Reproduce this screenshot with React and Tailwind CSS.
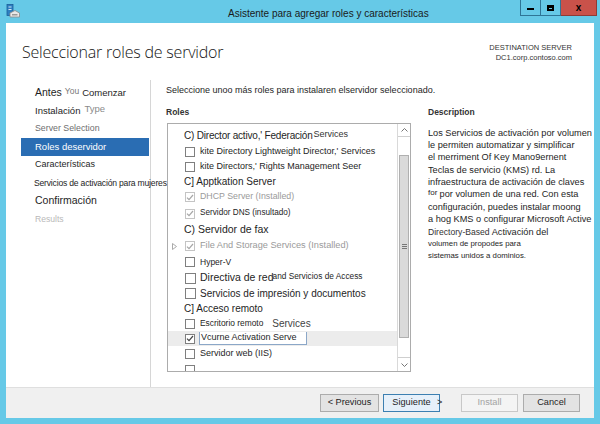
import React from "react";

function Check({ checked, disabled, big }) {
  return (
    <span
      className={
        "flex shrink-0 items-center justify-center bg-white border " +
        (big ? "w-[11px] h-[11px] " : "w-[10px] h-[10px] ") +
        (disabled ? "border-[#c4c4c4]" : "border-[#7f7f7f]")
      }
    >
      {checked && (
        <svg width="8" height="7" viewBox="0 0 8 7">
          <path
            d="M1 3.6 L3 5.6 L7 1"
            fill="none"
            stroke={disabled ? "#a6a6a6" : "#444"}
            strokeWidth="1.2"
          />
        </svg>
      )}
    </span>
  );
}

function Row({ h, className = "", children }) {
  return <div className={"flex items-center whitespace-nowrap " + h + " " + className}>{children}</div>;
}

function ServerIcon() {
  return (
    <svg width="14" height="15" viewBox="0 0 14 15">
      <rect x="1" y="0.5" width="6" height="11" fill="#2d7fc1" stroke="#1c5f99" strokeWidth="0.8" />
      <rect x="2.5" y="2.5" width="3" height="1" fill="#cfe6f7" />
      <rect x="2.5" y="5" width="3" height="1" fill="#cfe6f7" />
      <path d="M4 9 L9 6.5 L13.5 9 L13.5 13 L4 13 Z" fill="#e8e8e8" stroke="#8a8a8a" strokeWidth="0.8" />
      <rect x="6" y="10" width="5.5" height="1.5" fill="#9a9a9a" />
    </svg>
  );
}

export default function App() {
  return (
    <div className="w-[600px] h-[424px] bg-[#66c9e7] flex flex-col overflow-hidden font-['Liberation_Sans',Arial,sans-serif] text-[#1e1e1e]">
      {/* title bar */}
      <div className="h-[23px] flex items-start shrink-0">
        <div className="ml-[6px] mt-[4px]">
          <ServerIcon />
        </div>
        <div className="ml-[208px] mt-[8px] text-[10px] leading-[12px] text-[#1a1a1a] whitespace-nowrap">
          Asistente para agregar roles y características
        </div>
        <div className="ml-auto mr-[3px] flex">
          <div className="w-[21px] h-[16px] border border-[#2f7596] border-t-0 flex items-center justify-center">
            <span className="w-[7px] h-[2px] bg-black mt-[3px]" />
          </div>
          <div className="w-[20px] h-[16px] border border-l-0 border-t-0 border-[#2f7596] flex items-center justify-center">
            <span className="w-[7px] h-[6px] border-2 border-black border-t-[3px]" />
          </div>
          <div className="w-[36px] h-[16px] bg-[#c9524a] border border-l-0 border-t-0 border-[#8f3b36] flex items-center justify-center text-[10px] font-bold text-black leading-none">
            x
          </div>
        </div>
      </div>

      {/* white window body */}
      <div className="mx-[6px] mb-[6px] flex-1 bg-white flex flex-col">
        {/* header */}
        <div className="h-[57px] shrink-0 flex justify-between">
          <div className="pl-[16px] pt-[18px] text-[16px] leading-[22px] text-[#151515] font-['Open_Sans',sans-serif] font-light tracking-[-0.2px]">
            Seleccionar roles de servidor
          </div>
          <div className="pr-[22px] pt-[20px] text-right text-[7.5px] leading-[10px] text-[#333]">
            <div>DESTINATION SERVER</div>
            <div>DC1.corp.contoso.com</div>
          </div>
        </div>

        {/* body */}
        <div className="flex-1 flex">
          {/* nav */}
          <div className="w-[145px] shrink-0 border-r border-[#d6d6d6] pt-[4px] pl-[15px] text-[9.5px]">
            <div className="h-[18px] flex items-center pl-[14px] whitespace-nowrap">
              <span className="text-[10.5px]">Antes</span>
              <span className="ml-[3px] text-[8.5px] text-[#777] -mt-[3px]">You</span>
              <span className="ml-[3px] text-[9.5px]">Comenzar</span>
            </div>
            <div className="h-[18px] flex items-center pl-[14px] whitespace-nowrap">
              <span className="text-[9.5px]">Instalación</span>
              <span className="ml-[4px] text-[9.5px] text-[#8a8a8a] -mt-[3px]">Type</span>
            </div>
            <div className="h-[18px] flex items-center pl-[14px] text-[8.8px] text-[#6e6e6e]">Server Selection</div>
            <div className="h-[18px] w-[128px] flex items-center pl-[14px] bg-[#2a6db3] text-white text-[9.5px]">
              Roles deservidor
            </div>
            <div className="h-[18px] flex items-center pl-[14px] text-[9px]">Características</div>
            <div className="h-[18px] flex items-center pl-[13px] text-[8.6px] whitespace-nowrap tracking-[-0.2px]">
              Servicios de activación para mujeres
            </div>
            <div className="h-[18px] flex items-center pl-[14px] text-[10.5px]">Confirmación</div>
            <div className="h-[18px] flex items-center pl-[14px] text-[8.6px] text-[#b9b9b9]">Results</div>
          </div>

          {/* main */}
          <div className="flex-1 pl-[15px] flex flex-col">
            <div className="h-[21px] flex items-center text-[9px] whitespace-nowrap">
              Seleccione unoo más roles para instalaren elservidor seleccionado.
            </div>
            <div className="flex">
              {/* roles column */}
              <div className="w-[245px] shrink-0">
                <div className="h-[22px] flex items-center text-[8.5px] font-bold text-[#333]">Roles</div>
                <div className="ml-[1px] h-[249px] border border-[#acacac] flex overflow-hidden">
                  <div className="flex-1 pt-[3px] text-[9px] overflow-hidden">
                    <Row h="h-[17px]" className="pl-[16px]">
                      <span className="text-[10px] tracking-[-0.2px]">C) Director activo,' Federación</span>
                      <span className="ml-[1px] text-[9px] text-[#333] -mt-[2px]">Services</span>
                    </Row>
                    <Row h="h-[16px]" className="pl-[17px]">
                      <Check />
                      <span className="ml-[5px]">kite Directory Lightweight Director,' Services</span>
                    </Row>
                    <Row h="h-[14px]" className="pl-[17px]">
                      <Check />
                      <span className="ml-[5px]">kite Directors,' Rights Management Seer</span>
                    </Row>
                    <Row h="h-[15px]" className="pl-[16px] text-[10px]">
                      C] Apptkation Server
                    </Row>
                    <Row h="h-[16px]" className="pl-[17px] text-[#9a9a9a]">
                      <Check checked disabled />
                      <span className="ml-[5px] text-[8.8px]">DHCP Server (Installed)</span>
                    </Row>
                    <Row h="h-[17px]" className="pl-[17px]">
                      <Check checked disabled />
                      <span className="ml-[5px] text-[8.2px]">Servidor DNS (insultado)</span>
                    </Row>
                    <Row h="h-[16px]" className="pl-[16px] text-[10.5px]">
                      C) Servidor de fax
                    </Row>
                    <Row h="h-[16px]" className="pl-[4px] text-[#9a9a9a]">
                      <svg width="5" height="7" viewBox="0 0 5 7" className="mr-[8px]">
                        <path d="M0.5 0.5 L4.5 3.5 L0.5 6.5 Z" fill="none" stroke="#a0a0a0" strokeWidth="0.9" />
                      </svg>
                      <Check checked disabled />
                      <span className="ml-[5px] text-[9.2px]">File And Storage Services (Installed)</span>
                    </Row>
                    <Row h="h-[16px]" className="pl-[17px]">
                      <Check />
                      <span className="ml-[5px] text-[8.5px]">Hyper-V</span>
                    </Row>
                    <Row h="h-[16px]" className="pl-[17px]">
                      <Check big />
                      <span className="ml-[4px] text-[10.5px]">Directiva de red</span>
                      <span className="-ml-[1px] text-[8.3px] -mt-[4px]">and Servicios de Access</span>
                    </Row>
                    <Row h="h-[15px]" className="pl-[17px]">
                      <Check big />
                      <span className="ml-[4px] text-[10px]">Servicios de impresión y documentos</span>
                    </Row>
                    <Row h="h-[15px]" className="pl-[16px] text-[10px]">
                      C] Acceso remoto
                    </Row>
                    <Row h="h-[15px]" className="pl-[17px]">
                      <Check />
                      <span className="ml-[5px] text-[8.4px]">Escritorio remoto</span>
                      <span className="ml-[9px] text-[10px] text-[#444]">Services</span>
                    </Row>
                    <Row h="h-[15px]" className="pl-[17px] bg-[#ececec]">
                      <Check checked />
                      <span className="ml-[4px] h-[13px] w-[108px] bg-white border border-[#8ba7c8] border-t-0 flex items-center pl-[1px] text-[9px]">
                        Vcurne Activation Serve
                      </span>
                    </Row>
                    <Row h="h-[16px]" className="pl-[17px]">
                      <Check />
                      <span className="ml-[5px] text-[9px]">Servidor web (IIS)</span>
                    </Row>
                    <Row h="h-[12px]" className="pl-[17px] items-start pt-[3px]">
                      <Check />
                    </Row>
                  </div>
                  {/* scrollbar */}
                  <div className="w-[13px] shrink-0 border-l border-[#d9d9d9] flex flex-col bg-white">
                    <div className="h-[13px] flex items-center justify-center border-b border-[#cfcfcf]">
                      <svg width="7" height="4" viewBox="0 0 7 4">
                        <path d="M0.5 3.5 L3.5 0.5 L6.5 3.5" fill="none" stroke="#666" strokeWidth="0.9" />
                      </svg>
                    </div>
                    <div className="h-[18px]" />
                    <div className="h-[183px] mx-[1px] bg-[#dadada] border border-[#b0b0b0] flex items-center justify-center">
                      <span className="w-[5px] h-[5px] border-y border-[#777] flex items-center">
                        <span className="w-[5px] h-[1px] bg-[#777]" />
                      </span>
                    </div>
                    <div className="flex-1 border-b border-[#cfcfcf]" />
                    <div className="h-[13px] flex items-center justify-center">
                      <svg width="7" height="4" viewBox="0 0 7 4">
                        <path d="M0.5 0.5 L3.5 3.5 L6.5 0.5" fill="none" stroke="#666" strokeWidth="0.9" />
                      </svg>
                    </div>
                  </div>
                </div>
              </div>

              {/* description column */}
              <div className="ml-[17px] flex-1">
                <div className="h-[22px] flex items-center text-[8.5px] font-bold text-[#333]">Description</div>
                <div className="pt-[4px] text-[9.2px] leading-[12.2px] whitespace-nowrap">
                  <div>Los Servicios de activación por volumen</div>
                  <div>le permiten automatizar y simplificar</div>
                  <div>el merriment Of Key Mano9ernent</div>
                  <div>Teclas de servicio (KMS) rd. La</div>
                  <div>infraestructura de activación de claves</div>
                  <div>
                    <span className="text-[8px] relative -top-[2px]">for </span> por volumen de una red. Con esta
                  </div>
                  <div>configuración, puedes instalar moong</div>
                  <div>a hog KMS o configurar Microsoft Active</div>
                  <div>
                    <span className="text-[8.6px] text-[#333]">Directory-Based</span> Activación del
                  </div>
                  <div className="text-[7.8px] leading-[11px]">volumen de propodes para</div>
                  <div className="text-[7.8px] leading-[13px]">sistemas unidos a dominios.</div>
                </div>
              </div>
            </div>
          </div>
        </div>

        {/* footer */}
        <div className="h-[31px] shrink-0 border-t border-[#dfdfdf] bg-[#f0f0f0] flex items-center justify-end pr-[14px] text-[9.2px]">
          <button className="w-[59px] h-[18px] border border-[#acacac] bg-[#e3e3e3] flex items-center justify-center">
            &lt; Previous
          </button>
          <button className="ml-[4px] w-[57px] h-[18px] border border-[#3c7fb1] bg-[#e6f0fa] flex items-center justify-center">
            Siguiente
          </button>
          <span className="-ml-[3px] w-[6px] text-[9px]">&gt;</span>
          <button className="ml-[18px] w-[57px] h-[18px] border border-[#c8c8c8] bg-[#f4f4f4] text-[#a3a3a3] flex items-center justify-center">
            Install
          </button>
          <button className="ml-[5px] w-[57px] h-[18px] border border-[#acacac] bg-[#e3e3e3] flex items-center justify-center">
            Cancel
          </button>
        </div>
      </div>
    </div>
  );
}
